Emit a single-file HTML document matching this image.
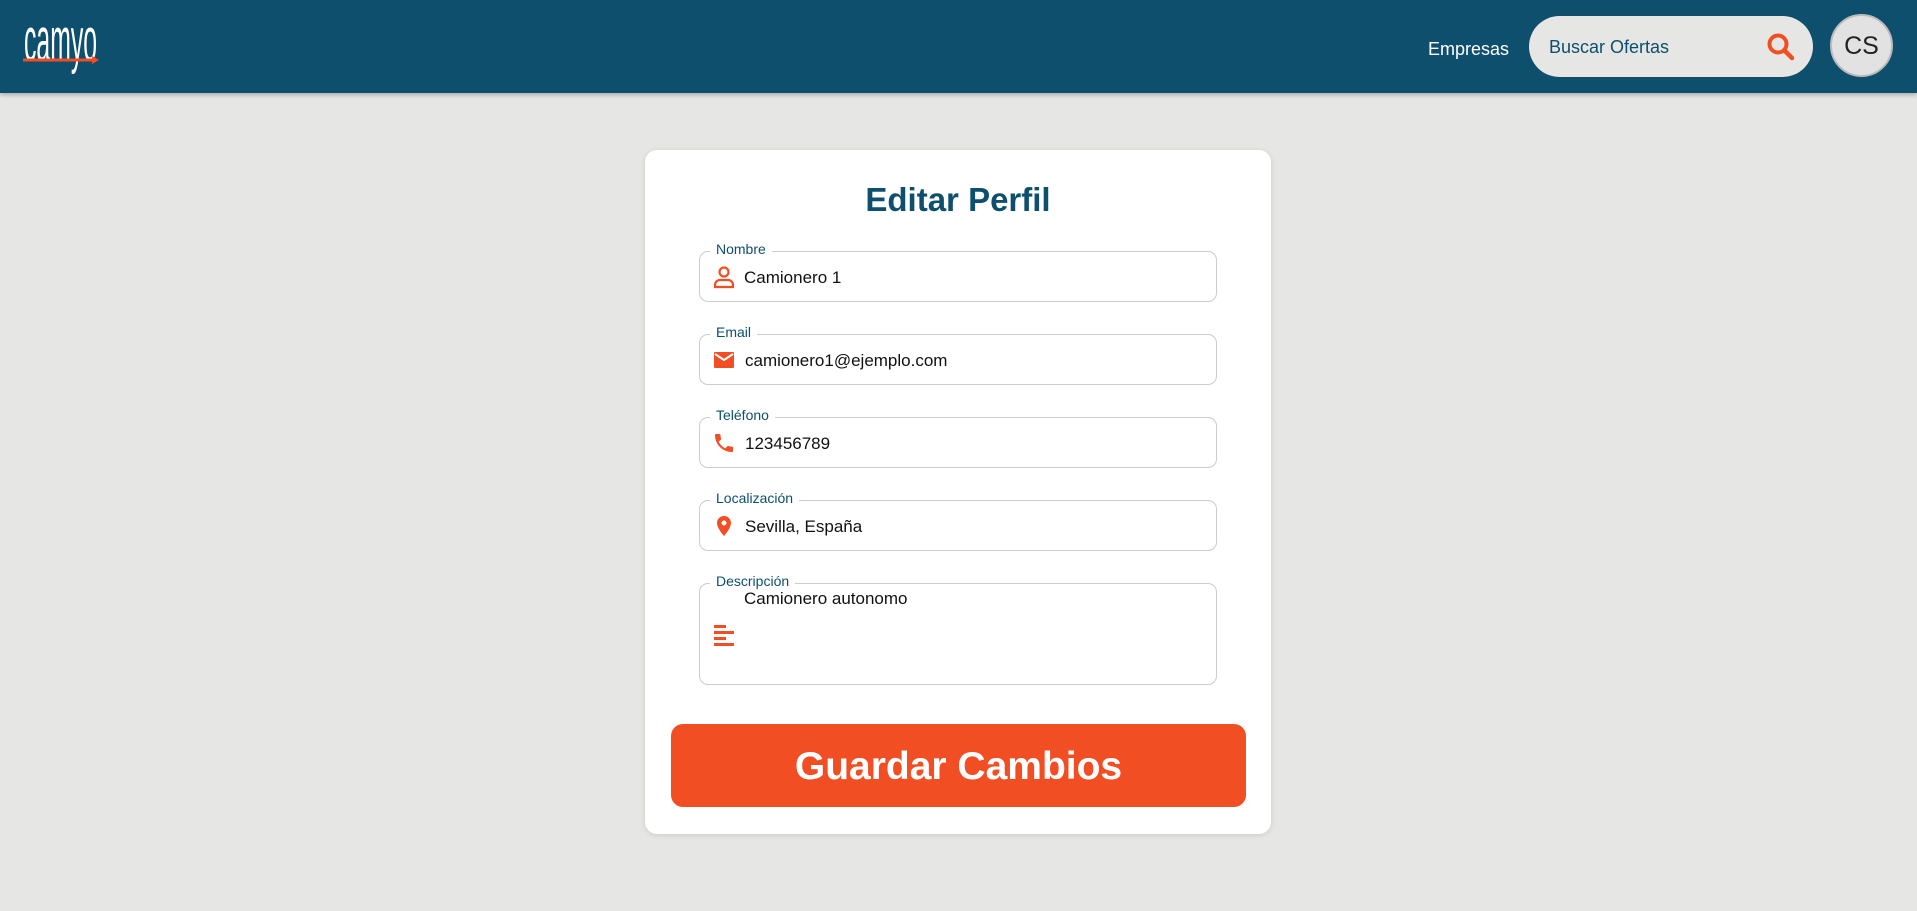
<!DOCTYPE html>
<html><head><meta charset="utf-8"><style>
*{box-sizing:border-box;margin:0;padding:0}
body{width:1917px;height:911px;background:#e6e7e4;font-family:"Liberation Sans",sans-serif;position:relative;overflow:hidden}
.hdr{position:absolute;left:0;top:0;width:1917px;height:93px;background:#0d4f6c;box-shadow:0 2px 4px rgba(0,0,0,.25)}
.logo{position:absolute;left:24px;top:10px;color:#fff;font-family:"Liberation Sans Narrow","Liberation Sans",sans-serif;font-size:40px;line-height:40px;transform:scale(.62,1.55);transform-origin:left top}
.emp{position:absolute;left:1428px;top:39px;color:#fff;font-size:18px}
.search{position:absolute;left:1529px;top:16px;width:284px;height:61px;border-radius:31px;background:#e6e7e4}
.search span{position:absolute;left:20px;top:21px;font-size:18px;color:#0d4f6c}
.av{position:absolute;left:1830px;top:14px;width:63px;height:63px;border-radius:50%;background:#e2e2e2;border:2px solid #bbb;font-size:25px;color:#222;text-align:center;line-height:61px}
.card{position:absolute;left:645px;top:150px;width:626px;height:684px;background:#fff;border-radius:12px;box-shadow:0 1px 6px rgba(0,0,0,.12)}
h1{position:absolute;left:0;width:100%;top:31px;text-align:center;font-size:33px;color:#0d4f6c;font-weight:bold}
.f{position:absolute;left:54px;width:518px;height:51px;border:1px solid #ccc;border-radius:9px}
.f label{position:absolute;left:10px;top:-12px;background:#fff;padding:0 6px;font-size:14px;color:#0d4f6c;line-height:18px}
.f .ic{position:absolute;left:12px;top:13px;width:24px;height:24px}
.f .t{position:absolute;left:45px;top:16px;font-size:17px;color:#111}
.btn{position:absolute;left:26px;top:574px;width:575px;height:83px;background:#f24e24;border-radius:12px;color:#fff;font-size:39px;font-weight:bold;text-align:center;line-height:85px}
</style></head><body>
<div class="hdr">
<div class="logo">camyo</div>
<svg style="position:absolute;left:23px;top:56px" width="76" height="8"><rect x="0" y="2.5" width="70" height="3" fill="#f24e24"/><polygon points="69,0 76,4 69,8" fill="#f24e24"/></svg>
<div class="emp">Empresas</div>
<div class="search"><span>Buscar Ofertas</span>
<svg style="position:absolute;left:237px;top:16px" width="30" height="30" viewBox="0 0 30 30"><circle cx="12" cy="12" r="8.5" fill="none" stroke="#f24e24" stroke-width="4"/><line x1="18.5" y1="18.5" x2="26" y2="26" stroke="#f24e24" stroke-width="4.5" stroke-linecap="round"/></svg></div>
<div class="av">CS</div>
</div>
<div class="card">
<h1>Editar Perfil</h1>
<div class="f" style="top:101px"><label>Nombre</label>
<svg class="ic" viewBox="0 0 24 24"><circle cx="12" cy="7" r="4.5" fill="none" stroke="#f24e24" stroke-width="2.2"/><path d="M3 22v-2a5 5 0 0 1 5-5h8a5 5 0 0 1 5 5v2z" fill="none" stroke="#f24e24" stroke-width="2.2"/></svg>
<div class="t" style="left:44px">Camionero 1</div></div>
<div class="f" style="top:184px"><label>Email</label>
<svg class="ic" viewBox="0 0 24 24"><rect x="2" y="4" width="20" height="16" rx="1" fill="#f24e24"/><path d="M3 6l9 6 9-6" fill="none" stroke="#fff" stroke-width="2"/></svg>
<div class="t">camionero1@ejemplo.com</div></div>
<div class="f" style="top:267px"><label>Teléfono</label>
<svg class="ic" viewBox="0 0 24 24"><path d="M6.6 10.8c1.4 2.8 3.8 5.1 6.6 6.6l2.2-2.2c.3-.3.7-.4 1-.2 1.1.4 2.3.6 3.6.6.6 0 1 .4 1 1V20c0 .6-.4 1-1 1C10.6 21 3 13.4 3 4c0-.6.4-1 1-1h3.5c.6 0 1 .4 1 1 0 1.3.2 2.5.6 3.6.1.3 0 .7-.2 1z" fill="#f24e24"/></svg>
<div class="t">123456789</div></div>
<div class="f" style="top:350px"><label>Localización</label>
<svg class="ic" viewBox="0 0 24 24"><path d="M12 2C8.1 2 5 5.1 5 9c0 5.2 7 13 7 13s7-7.8 7-13c0-3.9-3.1-7-7-7zm0 9.5a2.5 2.5 0 1 1 0-5 2.5 2.5 0 0 1 0 5z" fill="#f24e24"/></svg>
<div class="t">Sevilla, España</div></div>
<div class="f" style="top:433px;height:102px"><label>Descripción</label>
<svg class="ic" style="top:38px" viewBox="0 0 24 24"><rect x="2" y="3" width="12" height="3" fill="#f24e24"/><rect x="2" y="9" width="20" height="3" fill="#f24e24"/><rect x="2" y="15" width="12" height="3" fill="#f24e24"/><rect x="2" y="21" width="20" height="3" fill="#f24e24"/></svg>
<div class="t" style="left:44px;top:5px">Camionero autonomo</div></div>
<div class="btn">Guardar Cambios</div>
</div>
</body></html>
